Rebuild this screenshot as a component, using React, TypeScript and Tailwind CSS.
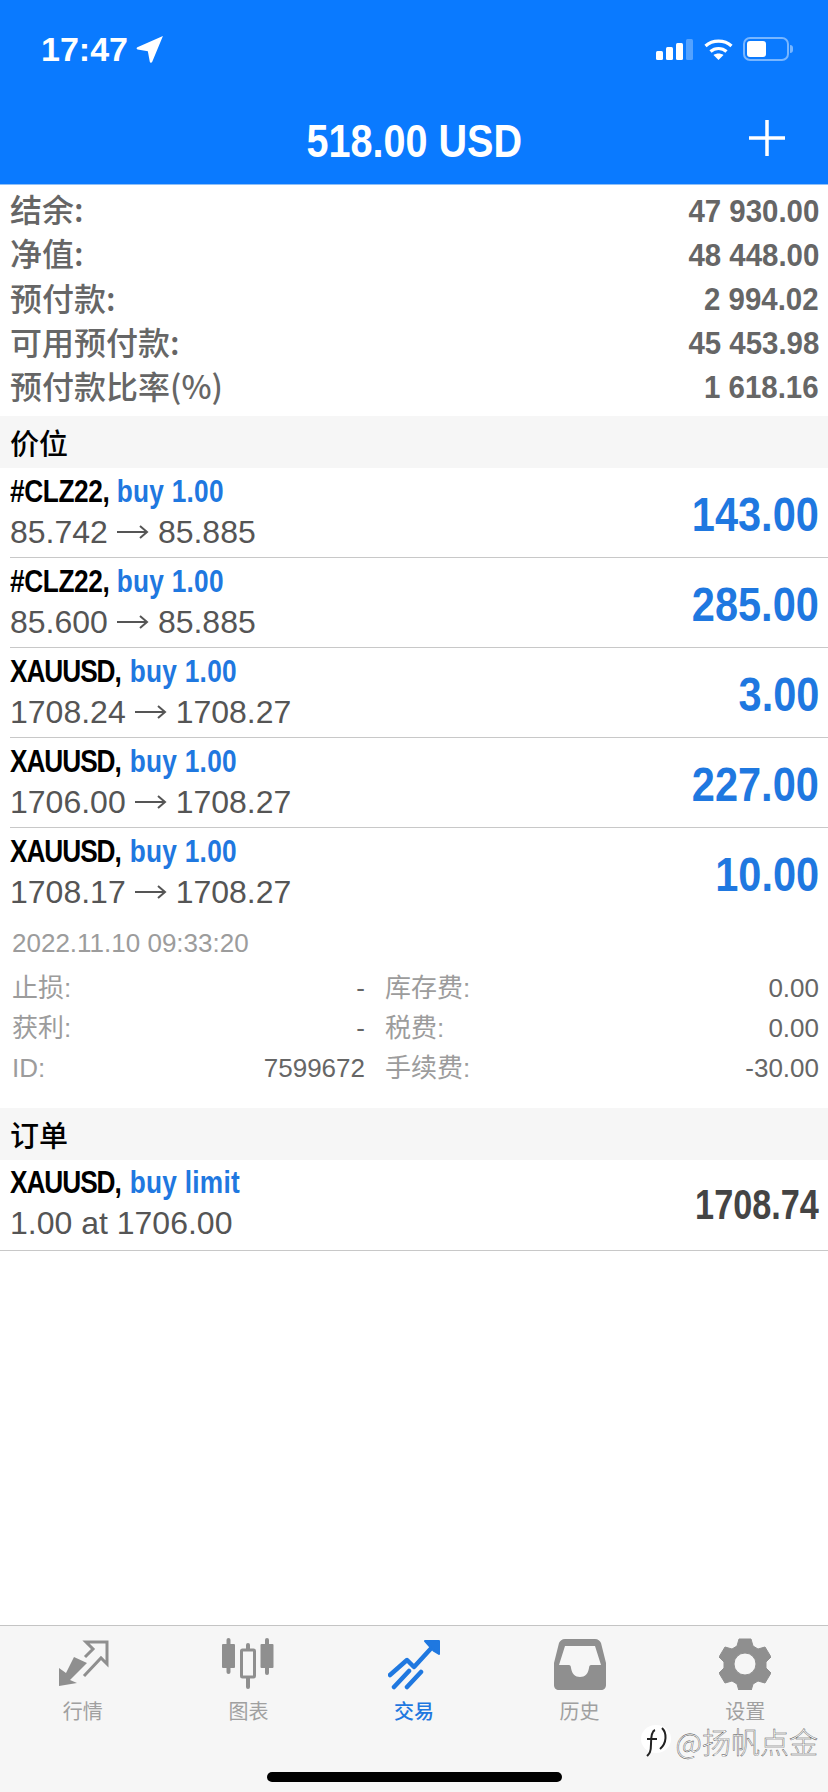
const SANS = "font-['Liberation_Sans','Noto_Sans_CJK_SC',sans-serif]";

const summary = [
  { label: '结余:', value: '47 930.00' },
  { label: '净值:', value: '48 448.00' },
  { label: '预付款:', value: '2 994.02' },
  { label: '可用预付款:', value: '45 453.98' },
  { label: '预付款比率(%)', value: '1 618.16' },
];

const positions = [
  { symbol: '#CLZ22,', open: '85.742', close: '85.885', profit: '143.00' },
  { symbol: '#CLZ22,', open: '85.600', close: '85.885', profit: '285.00' },
  { symbol: 'XAUUSD,', open: '1708.24', close: '1708.27', profit: '3.00' },
  { symbol: 'XAUUSD,', open: '1706.00', close: '1708.27', profit: '227.00' },
  { symbol: 'XAUUSD,', open: '1708.17', close: '1708.27', profit: '10.00' },
];

const details = [
  { a: '止损:', b: '-', c: '库存费:', d: '0.00' },
  { a: '获利:', b: '-', c: '税费:', d: '0.00' },
  { a: 'ID:', b: '7599672', c: '手续费:', d: '-30.00' },
];

function Arrow() {
  return (
    <svg width="32" height="16" viewBox="0 0 32 16" className="mx-[9px] inline-block" fill="none" stroke="#555" strokeWidth="2">
      <path d="M0 8h30M23 2l7 6-7 6" />
    </svg>
  );
}

function SectionHeader({ title }: { title: string }) {
  return (
    <div className="flex h-[52px] items-center bg-[#f6f6f6] px-[10px] pt-[1px] font-['Noto_Sans_CJK_SC',sans-serif] text-[29px] font-medium leading-none text-black">
      {title}
    </div>
  );
}

function TradeTitle({ symbol, action }: { symbol: string; action: string }) {
  const isFuture = symbol.startsWith('#');
  return (
    <div className="flex h-[34px] origin-left scale-x-[.82] items-center whitespace-nowrap text-[32px] font-bold leading-none">
      <span className={isFuture ? 'tracking-[-0.015em] text-black' : 'tracking-[-0.04em] text-black'}>{symbol}</span>
      <span className={`tracking-[0.01em] text-[#1f78e0] ${isFuture ? 'ml-[9px]' : 'ml-[11px]'}`}>{action}</span>
    </div>
  );
}

function PositionRow({ symbol, open, close, profit, last }: { symbol: string; open: string; close: string; profit: string; last?: boolean }) {
  return (
    <div className={`ml-[10px] flex h-[90px] items-center justify-between pr-[9px] ${last ? '' : 'border-b border-[#c8c8c8]'}`}>
      <div className="flex flex-col gap-[6px] pb-[2px]">
        <TradeTitle symbol={symbol} action="buy 1.00" />
        <div className="flex h-[36px] items-center text-[32px] leading-none text-[#555]">
          {open}
          <Arrow />
          {close}
        </div>
      </div>
      <div className="origin-right scale-x-[.865] pt-[4px] text-[48px] font-bold leading-none text-[#1f78e0]">{profit}</div>
    </div>
  );
}

function IconQuotes() {
  return (
    <svg width="52" height="52" viewBox="0 0 52 52" fill="#8f8f8f">
      <path d="M2 48V30l7 5 8-16 13 6-17 17 7 3z" />
      <path d="M27 38 44 20l6 6V4H29l7 7-8 8" fill="none" stroke="#8f8f8f" strokeWidth="3" />
    </svg>
  );
}

function IconChart() {
  return (
    <svg width="52" height="52" viewBox="0 0 52 52" fill="#8f8f8f">
      <rect x="4.500" y="0" width="4" height="36" rx="2" />
      <rect x="0" y="6" width="13" height="24" rx="1" />
      <rect x="24" y="5" width="4" height="46" rx="2" />
      <rect x="19.500" y="12" width="13" height="27" rx="1" fill="#f6f6f6" stroke="#8f8f8f" strokeWidth="3" />
      <rect x="43" y="0" width="4" height="37" rx="2" />
      <rect x="38.500" y="6" width="13" height="24" rx="1" />
    </svg>
  );
}

function IconTrade() {
  return (
    <svg width="52" height="52" viewBox="0 0 52 52" fill="none" stroke="#1f78e0" strokeWidth="4.500" strokeLinecap="round" strokeLinejoin="round">
      <path d="M2 37 19 22l7 7 22-24" />
      <path d="M37 3h14v13l-5-3z" fill="#1f78e0" strokeWidth="2" />
      <path d="M6 49 21 33M19 49l14-15" />
    </svg>
  );
}

function IconHistory() {
  return (
    <svg width="52" height="52" viewBox="0 0 52 52">
      <path
        fillRule="evenodd"
        fill="#8f8f8f"
        d="M11 1h30c3 0 5 2 6 4l5 20v22c0 3-2 5-5 5H5c-3 0-5-2-5-5V25L5 5c1-2 3-4 6-4zM11 8 5 27h10c1 0 2 1 2 3 1 6 4 9 9 9s8-3 9-9c0-2 1-3 2-3h10L41 8z"
      />
    </svg>
  );
}

function IconGear() {
  return (
    <svg width="52" height="52" viewBox="0 0 52 52">
      <path
        fillRule="evenodd"
        fill="#8f8f8f"
        d="M20 1h12l2 7 5 3 7-2 6 10-5 5v6l5 5-6 10-7-2-5 3-2 7H20l-2-7-5-3-7 2-6-10 5-5v-6l-5-5 6-10 7 2 5-3zM26 15a11 11 0 1 0 0 22 11 11 0 0 0 0-22z"
        stroke="#8f8f8f"
        strokeWidth="1"
        strokeLinejoin="round"
      />
    </svg>
  );
}

const tabs = [
  { label: '行情', icon: <IconQuotes />, active: false },
  { label: '图表', icon: <IconChart />, active: false },
  { label: '交易', icon: <IconTrade />, active: true },
  { label: '历史', icon: <IconHistory />, active: false },
  { label: '设置', icon: <IconGear />, active: false },
];

function StatusBar() {
  return (
    <div className="flex h-[70px] items-end justify-between pl-[41px] pr-[35px]">
      <div className="flex items-center gap-[8px] pb-[1px] text-[34px] font-bold leading-[40px] text-white">
        <span>17:47</span>
        <svg width="28" height="28" viewBox="0 0 26 26" fill="#fff">
          <path d="M25 1 15 25c-.5 1-2 1-2.200-.2L11 15 1.500 13.500C.3 13.200.3 12 1.300 11.400z" />
        </svg>
      </div>
      <div className="flex items-center gap-[9px] pb-[9px]">
        <svg width="38" height="22" viewBox="0 0 38 22">
          <rect x="0" y="13" width="7" height="9" rx="1.500" fill="#fff" />
          <rect x="10" y="9" width="7" height="13" rx="1.500" fill="#fff" />
          <rect x="20" y="5" width="7" height="17" rx="1.500" fill="#fff" />
          <rect x="30" y="1" width="7" height="21" rx="1.500" fill="#fff" fillOpacity=".3" />
        </svg>
        <svg width="31" height="22" viewBox="0 0 30 22" fill="none" stroke="#fff" strokeWidth="3.200">
          <path d="M2 8c7-6.500 19-6.500 26 0M7 13.500c4.500-4 11.500-4 16 0" />
          <path d="m15 22-5-5c3-2 7-2 10 0z" fill="#fff" stroke="none" />
        </svg>
        <div className="flex items-center">
          <div className="h-[24px] w-[46px] rounded-[7px] border-2 border-white/45 p-[2px]">
            <div className="h-full w-[19px] rounded-[3px] bg-white" />
          </div>
          <div className="ml-[1px] h-[8px] w-[3px] rounded-r-full bg-white/45" />
        </div>
      </div>
    </div>
  );
}

export default function App() {
  return (
    <div className={`relative flex h-[1792px] w-[828px] flex-col overflow-hidden bg-white ${SANS}`}>
      <header className="h-[185px] shrink-0 border-b border-[#8fc0f7] bg-[#0a7aff]">
        <StatusBar />
        <div className="relative flex h-[114px] items-center justify-center pt-[28px]">
          <div className="scale-x-[.86] text-[46px] font-bold leading-none text-white">518.00 USD</div>
          <svg width="36" height="36" viewBox="0 0 36 36" className="absolute right-[43px] top-[50px]" stroke="#fff" strokeWidth="3.500">
            <path d="M18 0v36M0 18h36" />
          </svg>
        </div>
      </header>

      <div className="flex h-[231px] shrink-0 flex-col justify-center pb-[3px] pl-[10px] pr-[9px]">
        {summary.map((row) => (
          <div key={row.label} className="flex h-[44.200px] items-center justify-between text-[#666]">
            <span className="pb-[5px] font-['Noto_Sans_CJK_SC',sans-serif] text-[32px] font-medium leading-none">{row.label}</span>
            <span className="origin-right scale-x-[.92] text-[32px] font-bold leading-none">{row.value}</span>
          </div>
        ))}
      </div>

      <SectionHeader title="价位" />
      {positions.map((p, i) => (
        <PositionRow key={i} {...p} last={i === positions.length - 1} />
      ))}

      <div className="pb-[20px] pl-[12px] pr-[9px] pt-[5px] text-[26px] leading-none">
        <div className="flex h-[40px] items-center text-[#9c9c9c]">2022.11.10 09:33:20</div>
        <div className="mt-[5px]">
          {details.map((d) => (
            <div key={d.a} className="flex h-[40px] items-center">
              <div className="flex w-[353px] justify-between">
                <span className="text-[#9c9c9c]">{d.a}</span>
                <span className="text-[#666]">{d.b}</span>
              </div>
              <div className="ml-[20px] flex flex-1 justify-between">
                <span className="text-[#9c9c9c]">{d.c}</span>
                <span className="text-[#666]">{d.d}</span>
              </div>
            </div>
          ))}
        </div>
      </div>

      <SectionHeader title="订单" />
      <div className="flex h-[91px] items-center justify-between border-b border-[#c8c8c8] pl-[10px] pr-[9px]">
        <div className="flex flex-col gap-[6px] pb-[4px]">
          <TradeTitle symbol="XAUUSD," action="buy limit" />
          <div className="flex h-[36px] items-center text-[32px] leading-none text-[#555]">1.00 at 1706.00</div>
        </div>
        <div className="origin-right scale-x-[.815] text-[42px] font-bold leading-none text-[#444]">1708.74</div>
      </div>

      <div className="flex-1" />

      <nav className="h-[167px] shrink-0 border-t border-[#c4c4c4] bg-[#f6f6f6]">
        <div className="grid grid-cols-5 pt-[12px]">
          {tabs.map((tab) => (
            <div key={tab.label} className="flex flex-col items-center">
              <div className="flex h-[52px] items-center justify-center">{tab.icon}</div>
              <div className={`mt-[6px] text-[20px] leading-[32px] ${tab.active ? 'font-medium text-[#1f78e0]' : 'text-[#a0a0a0]'}`}>
                {tab.label}
              </div>
            </div>
          ))}
        </div>
        <div className="mx-auto mt-[44px] h-[10px] w-[295px] rounded-full bg-black" />
      </nav>

      {/* watermark over the tab bar */}
      <div className="absolute right-[10px] top-[1724px] flex items-center gap-[3px]">
        <svg width="32" height="34" viewBox="0 0 32 34">
          <ellipse cx="15" cy="15" rx="15" ry="14" fill="#fff" />
          <path d="M14 6c-3 1-4 5-4 14s-2 10-4 12M6 15h10M21 4c5 5 5 15-2 21" fill="none" stroke="#222" strokeWidth="2" />
        </svg>
        <span className="font-['Noto_Sans_CJK_SC',sans-serif] text-[29px] font-light leading-none text-white [-webkit-text-stroke:0.4px_#444]">@扬帆点金</span>
      </div>
    </div>
  );
}
